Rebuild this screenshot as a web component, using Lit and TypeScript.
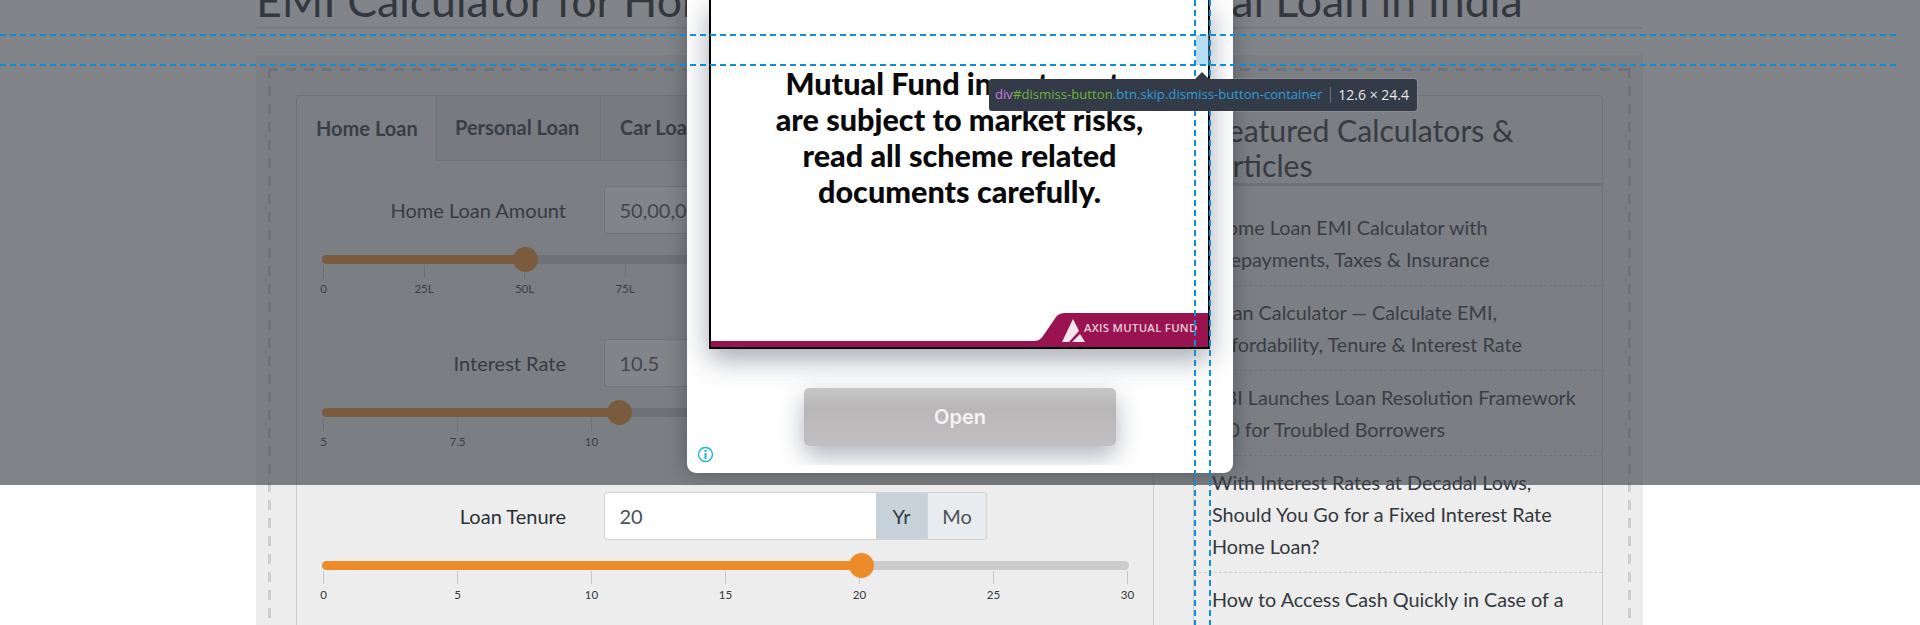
import { LitElement, html, css } from "lit";
import { customElement } from "lit/decorators.js";

interface Slider { label: string; value: string; addon: string[]; active: number; ticks: string[]; pct: number; }

const sliders: Slider[] = [
  { label: "Home Loan Amount", value: "50,00,000", addon: ["₹"], active: -1, ticks: ["0","25L","50L","75L","100L","125L","150L","175L","200L"], pct: 25.2 },
  { label: "Interest Rate", value: "10.5", addon: ["%"], active: -1, ticks: ["5","7.5","10","12.5","15","17.5","20"], pct: 36.85 },
  { label: "Loan Tenure", value: "20", addon: ["Yr","Mo"], active: 0, ticks: ["0","5","10","15","20","25","30"], pct: 66.8 },
];

const articles = [
  "Home Loan EMI Calculator with Prepayments, Taxes & Insurance",
  "Loan Calculator — Calculate EMI, Affordability, Tenure & Interest Rate",
  "RBI Launches Loan Resolution Framework 2.0 for Troubled Borrowers",
  "With Interest Rates at Decadal Lows, Should You Go for a Fixed Interest Rate Home Loan?",
  "How to Access Cash Quickly in Case of a Financial Emergency",
];

@customElement("app-root")
export class AppRoot extends LitElement {
  static styles = css`
    :host { display: block; position: relative; width: 1920px; height: 625px; overflow: hidden; background: #fff; font-family: Lato, "Liberation Sans", sans-serif; color: #212529; }
    .page { width: 1387px; margin-left: 256px; }
    h1 { margin: -28px 0 0; height: 56px; box-sizing: border-box; border-bottom: 1px solid #e0e0e0; font-size: 44.67px; font-weight: 400; line-height: 56px; white-space: nowrap; color: #212529; box-shadow: 0 1px 0 #ececec; }
    .band { margin-top: 27px; padding: 13px 12px; background: #ededed; height: 700px; box-sizing: border-box; }
    .dash {
      display: flex; gap: 39px; padding: 27px 27px 0 28px; height: 800px; width: 1363px; box-sizing: border-box; align-items: flex-start;
      background-image:
        repeating-linear-gradient(90deg, #cfcfcf 0 10px, transparent 10px 18px),
        repeating-linear-gradient(180deg, #cfcfcf 0 10px, transparent 10px 18px),
        repeating-linear-gradient(180deg, #cfcfcf 0 10px, transparent 10px 18px);
      background-size: 100% 3px, 3px 100%, 3px 100%;
      background-position: 0 0, 0 0, 100% 0;
      background-repeat: no-repeat;
    }
    .calc { width: 858px; flex: none; border: 1px solid #ccc; border-radius: 5px; box-sizing: border-box; height: 800px; }
    .tabs { display: flex; height: 65px; }
    .tab { padding: 0 19px 2px; display: flex; align-items: center; font-size: 20px; font-weight: 700; color: #33383d; background: #e1e1e1; border-right: 1px solid #cdcdcd; border-bottom: 1px solid #cdcdcd; box-sizing: border-box; white-space: nowrap; }
    .tab.active { background: transparent; border-bottom: 0; border-radius: 5px 0 0 0; width: 140px; }
    .tab.personal { width: 164px; padding-left: 18px; }
    .tabs .rest { flex: 1; background: #e1e1e1; border-bottom: 1px solid #cdcdcd; border-radius: 0 5px 0 0; }
    .body { padding: 25px 25px 0; }
    .row { height: 153px; }
    .field { display: flex; align-items: center; gap: 38px; height: 48px; }
    .label { width: 244px; text-align: right; font-size: 20px; color: #2b3035; }
    .group { display: flex; height: 48px; font-size: 20px; }
    .input { width: 272px; box-sizing: border-box; padding: 0 14.5px; line-height: 46px; background: #fff; border: 1px solid #ced4da; border-right: 0; border-radius: 4px 0 0 4px; color: #495057; }
    .addon { display: flex; align-items: center; justify-content: center; min-width: 52px; background: #e9ecef; border: 1px solid #ced4da; border-left: 0; box-sizing: border-box; color: #495057; }
    .addon.on { background: #c8d2da; color: #343a40; }
    .addon.alt { min-width: 59px; }
    .addon:last-child { border-radius: 0 4px 4px 0; }
    .track { position: relative; margin-top: 21px; width: 807px; height: 9px; border-radius: 5px; background: #cbcbcb; }
    .fill { height: 9px; border-radius: 5px; background: #ed8b2a; }
    .knob { position: absolute; top: -8px; width: 25px; height: 25px; margin-left: -12.5px; border-radius: 50%; background: #ed8b2a; }
    .ticks { display: flex; justify-content: space-between; width: 805px; margin: 1px 0 0 1px; }
    .tick { width: 1px; display: flex; flex-direction: column; align-items: center; }
    .tick i { display: block; width: 1px; height: 13px; background: #c6c6c6; flex: none; }
    .tick span { margin-top: 3px; font-size: 11.5px; line-height: 15px; color: #343a40; white-space: nowrap; }
    .side { width: 410px; flex: none; border: 1px solid #ccc; border-radius: 5px; box-sizing: border-box; height: 800px; }
    .side h2 { margin: 0; padding: 17px 18px 0; height: 90px; box-sizing: border-box; font-size: 30.2px; line-height: 35px; font-weight: 400; color: #2b3035; border-bottom: 3px solid #c9c9c9; }
    ul { list-style: none; margin: 0; padding: 15px 0 0; }
    li { padding: 10px 18px; font-size: 19.8px; line-height: 32px; color: #33383d; border-bottom: 1px dashed #cfcfcf; }

    .overlay { position: absolute; left: 0; top: 0; width: 1920px; height: 485px; background: rgba(62, 66, 73, .65); overflow: hidden; }
    .modal { position: absolute; left: 687px; top: 0; width: 546px; height: 473px; background: #fff; border-radius: 0 0 9px 9px; box-shadow: 0 0 22px rgba(0, 0, 0, .3); }
    .ad { height: 465px; overflow: hidden; display: flex; flex-direction: column; align-items: center; }
    .creative { position: relative; flex: none; width: 501px; height: 349px; margin-right: 1px; box-sizing: border-box; border: solid #000; border-width: 0 2px 2px; background: #fff; box-shadow: 0 10px 26px rgba(50, 60, 85, .45); text-align: center; }
    .copy { padding-top: 66px; font-size: 30.6px; line-height: 36px; font-weight: 900; color: #0a0a0a; }
    .brand { position: absolute; right: 0; bottom: 0; width: 497px; height: 35px; display: block; }
    .axis { position: absolute; left: 373px; bottom: 12px; font: 600 11.3px/14px "Open Sans", sans-serif; color: #e9cfdc; white-space: nowrap; letter-spacing: .3px; }
    .open { flex: none; margin-top: 39px; width: 312px; height: 58px; display: flex; align-items: center; justify-content: center; border-radius: 5px; background: linear-gradient(#c7c7c7, #b8b6b7 35%, #c1bfc1); box-shadow: 0 10px 24px rgba(60, 70, 95, .4); color: #f4f4f4; font: 600 20px Inter, sans-serif; }
    .info { position: absolute; left: 10px; bottom: 10px; width: 17px; height: 17px; }

    .guides { position: absolute; left: 0; top: 0; width: 1920px; height: 625px; pointer-events: none; }
    .hl { position: absolute; left: 1196px; top: 35px; width: 13px; height: 30px; background: rgba(111, 190, 230, .5); }
    .tip { position: absolute; left: 989px; top: 79px; width: 428px; height: 32px; box-sizing: border-box; padding: 0 8px 0 6px; display: flex; align-items: center; background: #343b48; border-radius: 3px; font: 13.15px/1 "Open Sans", sans-serif; white-space: nowrap; box-shadow: 0 0 0 1px rgba(255,255,255,.12); }
    .tip::before { content: ""; position: absolute; left: 206px; top: -7px; border: 7px solid transparent; border-top: 0; border-bottom-color: #343b48; }
    .tag { color: #c77ddb; } .id { color: #6cb33f; } .cls { color: #2f9bd8; }
    .sep { width: 1px; height: 16px; background: #6c727c; margin: 0 0 0 8px; flex: none; }
    .dims { color: #e6e8eb; margin-left: auto; font-size: 14px; }
  `;

  private renderSlider(s: Slider) {
    return html`<div class="row">
      <div class="field">
        <div class="label">${s.label}</div>
        <div class="group">
          <div class="input">${s.value}</div>
          ${s.addon.map((a, i) => html`<div class="addon ${i === s.active ? "on" : ""} ${i === 1 ? "alt" : ""}">${a}</div>`)}
        </div>
      </div>
      <div class="track">
        <div class="fill" style="width:${s.pct}%"></div>
        <div class="knob" style="left:${s.pct}%"></div>
      </div>
      <div class="ticks">${s.ticks.map((t) => html`<div class="tick"><i></i><span>${t}</span></div>`)}</div>
    </div>`;
  }

  render() {
    return html`
      <div class="page">
        <h1>EMI Calculator for Home Loan, Car Loan &amp; Personal Loan in India</h1>
        <div class="band">
          <div class="dash">
            <div class="calc">
              <div class="tabs">
                <div class="tab active">Home Loan</div>
                <div class="tab personal">Personal Loan</div>
                <div class="tab">Car Loan</div>
                <div class="rest"></div>
              </div>
              <div class="body">${sliders.map((s) => this.renderSlider(s))}</div>
            </div>
            <div class="side">
              <h2>Featured Calculators &amp; Articles</h2>
              <ul>${articles.map((a) => html`<li>${a}</li>`)}</ul>
            </div>
          </div>
        </div>
      </div>

      <div class="overlay">
        <div class="modal">
          <div class="ad">
            <div class="creative">
              <div class="copy">Mutual Fund investments<br />are subject to market risks,<br />read all scheme related<br />documents carefully.</div>
              <svg class="brand" viewBox="0 0 497 35">
                <path fill="#98134f" d="M0 29 H323 Q329 29 332 24 L345 5 Q348 1 354 1 H497 V35 H0 Z" />
                <path fill="#f4e6ec" d="M351 30 L362 7 L368 19 L358 30 Z" />
                <path fill="#f4e6ec" d="M361 30 L369 22 L374 30 Z" />
              </svg>
              <div class="axis">AXIS MUTUAL FUND</div>
            </div>
            <div class="open">Open</div>
          </div>
          <svg class="info" viewBox="0 0 17 17">
            <circle cx="8.5" cy="8.5" r="7" fill="none" stroke="#12b5d8" stroke-width="1.4" />
            <rect x="7.5" y="7" width="2" height="6" fill="#12b5d8" />
            <rect x="7.5" y="4" width="2" height="2" fill="#12b5d8" />
          </svg>
        </div>
      </div>

      <div class="hl"></div>
      <svg class="guides" viewBox="0 0 1920 625">
        <g fill="none" stroke="#0d8fd8" stroke-width="2" stroke-dasharray="6 4">
          <path d="M0 35 H1896" />
          <path d="M0 65 H1896" />
          <path d="M1195 0 V625" />
          <path d="M1210 0 V625" />
        </g>
      </svg>
      <div class="tip">
        <span class="tag">div</span><span class="id">#dismiss-button</span><span class="cls">.btn.skip.dismiss-button-container</span>
        <span class="sep"></span><span class="dims">12.6 × 24.4</span>
      </div>
    `;
  }
}
